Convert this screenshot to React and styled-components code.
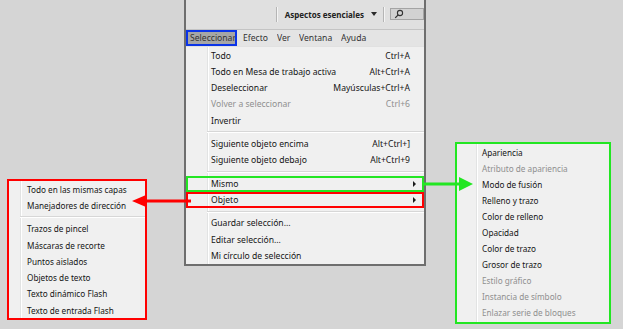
import React from 'react';
import styled, { createGlobalStyle } from 'styled-components';

const GlobalStyle = createGlobalStyle`
  html, body { margin: 0; padding: 0; background: #d5d5d5; }
  body { font-family: "Noto Sans", "Open Sans", sans-serif; }
`;

const MENU = [
  [
    { label: 'Todo', keys: 'Ctrl+A' },
    { label: 'Todo en Mesa de trabajo activa', keys: 'Alt+Ctrl+A' },
    { label: 'Deseleccionar', keys: 'Mayúsculas+Ctrl+A' },
    { label: 'Volver a seleccionar', keys: 'Ctrl+6', disabled: true },
    { label: 'Invertir' },
  ],
  [
    { label: 'Siguiente objeto encima', keys: 'Alt+Ctrl+]' },
    { label: 'Siguiente objeto debajo', keys: 'Alt+Ctrl+9' },
  ],
  [
    { label: 'Mismo', sub: true, mark: '#22e622' },
    { label: 'Objeto', sub: true, mark: '#ff0000' },
  ],
  [
    { label: 'Guardar selección...' },
    { label: 'Editar selección...' },
    { label: 'Mi círculo de selección' },
  ],
];

const OBJETO = [
  [{ label: 'Todo en las mismas capas' }, { label: 'Manejadores de dirección' }],
  [
    { label: 'Trazos de pincel' },
    { label: 'Máscaras de recorte' },
    { label: 'Puntos aislados' },
    { label: 'Objetos de texto' },
    { label: 'Texto dinámico Flash' },
    { label: 'Texto de entrada Flash' },
  ],
];

const MISMO = [
  [
    { label: 'Apariencia' },
    { label: 'Atributo de apariencia', disabled: true },
    { label: 'Modo de fusión' },
    { label: 'Relleno y trazo' },
    { label: 'Color de relleno' },
    { label: 'Opacidad' },
    { label: 'Color de trazo' },
    { label: 'Grosor de trazo' },
    { label: 'Estilo gráfico', disabled: true },
    { label: 'Instancia de símbolo', disabled: true },
    { label: 'Enlazar serie de bloques', disabled: true },
  ],
];

const Stage = styled.div`
  position: relative;
  width: 623px;
  height: 329px;
  overflow: hidden;
  display: flex;
  align-items: flex-start;
  padding-left: 7px;
  box-sizing: border-box;
  background: #d5d5d5;
`;

const Callout = styled.div`
  box-sizing: border-box;
  margin-top: ${(p) => p.$top}px;
  margin-left: ${(p) => p.$left || 0}px;
  width: ${(p) => p.$width}px;
  height: ${(p) => p.$height}px;
  border: 2px solid ${(p) => p.$color};
  background: #f0f0f0;
  flex-shrink: 0;
`;

const Panel = styled.div`
  background: linear-gradient(
    to right,
    #f0f0f0 ${(p) => p.$gutter}px,
    #e2e3e3 ${(p) => p.$gutter}px,
    #e2e3e3 ${(p) => p.$gutter + 1}px,
    #ffffff ${(p) => p.$gutter + 1}px,
    #ffffff ${(p) => p.$gutter + 2}px,
    #f0f0f0 ${(p) => p.$gutter + 2}px
  );
  height: 100%;
`;

const Row = styled.div`
  box-sizing: border-box;
  height: ${(p) => p.$h}px;
  display: flex;
  align-items: center;
  justify-content: space-between;
  padding-left: ${(p) => p.$pad}px;
  padding-right: ${(p) => (p.$sub ? 8 : 14)}px;
  font-size: ${(p) => p.$size}px;
  color: ${(p) => (p.$disabled ? '#8f8f8f' : '#141414')};
  white-space: nowrap;
  outline: ${(p) => (p.$mark ? `2px solid ${p.$mark}` : 'none')};
  outline-offset: -2px;
`;

const Sep = styled.div`
  height: 7px;
  display: flex;
  align-items: center;
  padding-left: ${(p) => p.$gutter}px;
  &::after {
    content: '';
    flex: 1;
    border-top: 1px solid #d7d7d7;
    border-bottom: 1px solid #ffffff;
    box-sizing: border-box;
    height: 2px;
  }
`;

const SubArrow = styled.span`
  width: 0;
  height: 0;
  border-top: 3px solid transparent;
  border-bottom: 3px solid transparent;
  border-left: 3px solid #1b1b1b;
`;

const Window = styled.div`
  box-sizing: border-box;
  margin-left: ${(p) => p.$left}px;
  width: 242px;
  height: 266px;
  border: 2px solid #6e6e6e;
  border-top: none;
  background: #e1e1e1;
  display: flex;
  flex-direction: column;
  flex-shrink: 0;
`;

const Toolbar = styled.div`
  height: 29px;
  border-bottom: 1px solid #c4c4c4;
  display: flex;
  align-items: center;
  justify-content: flex-end;
  background: #e0e0e0;
`;

const ToolSep = styled.div`
  width: 1px;
  height: 15px;
  background: #b5b5b5;
  box-shadow: 1px 0 0 #f4f4f4;
  margin-right: ${(p) => p.$right}px;
`;

const Workspace = styled.div`
  display: flex;
  align-items: center;
  gap: 7px;
  font-size: 8px;
  font-weight: 700;
  color: #222;
  margin-right: 6px;
  white-space: nowrap;
`;

const Caret = styled.span`
  width: 0;
  height: 0;
  border-left: 3px solid transparent;
  border-right: 3px solid transparent;
  border-top: 4px solid #2a2a2a;
`;

const Search = styled.div`
  width: 34px;
  height: 12px;
  border: 1px solid #a4a4a4;
  background: #d2d2d2;
  display: flex;
  align-items: center;
  padding-left: 3px;
  box-sizing: border-box;
  margin-bottom: 1px;
`;

const MenuBar = styled.div`
  height: 17px;
  display: flex;
  align-items: center;
  background: #e4e4e4;
  font-size: 8.6px;
  color: #333;
`;

const MenuTitle = styled.div`
  box-sizing: border-box;
  height: 16px;
  display: flex;
  align-items: center;
  padding-left: ${(p) => (p.$active ? 2 : 0)}px;
  width: ${(p) => p.$w}px;
  background: ${(p) => (p.$active ? '#a6a6a6' : 'transparent')};
  border: ${(p) => (p.$active ? '2px solid #0b34e8' : 'none')};
  margin-right: ${(p) => (p.$active ? 6 : 0)}px;
  white-space: nowrap;
  overflow: hidden;
`;

const Dropdown = styled.div`
  flex: 1;
  padding-top: 1px;
`;

const Arrows = styled.svg`
  position: absolute;
  left: 0;
  top: 0;
  pointer-events: none;
`;

const MenuList = ({ groups, gutter, pad, rowH, size }) => (
  <Panel $gutter={gutter}>
    {groups.map((group, gi) => (
      <React.Fragment key={gi}>
        {gi > 0 && <Sep $gutter={gutter} />}
        {group.map((item) => (
          <Row
            key={item.label}
            $h={rowH}
            $pad={pad}
            $size={size}
            $disabled={item.disabled}
            $sub={item.sub}
            $mark={item.mark}
          >
            <span>{item.label}</span>
            {item.keys && <span>{item.keys}</span>}
            {item.sub && <SubArrow />}
          </Row>
        ))}
      </React.Fragment>
    ))}
  </Panel>
);

const App = () => {
  return (
    <>
      <GlobalStyle />
      <Stage>
        <Callout $top={179} $width={140} $height={141} $color="#ff0000">
          <MenuList groups={OBJETO} gutter={11} pad={18} rowH={16.3} size={8.2} />
        </Callout>

        <Window $left={37}>
          <Toolbar>
            <ToolSep $right={8} />
            <Workspace>
              Aspectos esenciales <Caret />
            </Workspace>
            <ToolSep $right={6} />
            <Search>
              <svg width="10" height="10" viewBox="0 0 10 10">
                <circle cx="6" cy="4" r="2.6" fill="none" stroke="#333" strokeWidth="1.1" />
                <line x1="4.2" y1="5.9" x2="1.2" y2="8.9" stroke="#333" strokeWidth="1.3" />
              </svg>
            </Search>
          </Toolbar>
          <MenuBar>
            <MenuTitle $active $w={51}>Seleccionar</MenuTitle>
            <MenuTitle $w={34}>Efecto</MenuTitle>
            <MenuTitle $w={22}>Ver</MenuTitle>
            <MenuTitle $w={42}>Ventana</MenuTitle>
            <MenuTitle $w={30}>Ayuda</MenuTitle>
          </MenuBar>
          <Dropdown>
            <MenuList groups={MENU} gutter={21} pad={25} rowH={16.3} size={8.6} />
          </Dropdown>
        </Window>

        <Callout $top={142} $left={29} $width={156} $height={182} $color="#22e622">
          <MenuList groups={MISMO} gutter={19} pad={25} rowH={16} size={8.2} />
        </Callout>

        <Arrows width="623" height="329">
          <line x1="424" y1="184" x2="462" y2="184" stroke="#22e622" strokeWidth="3" />
          <polygon points="459,177 473,184 459,191" fill="#22e622" />
          <line x1="191" y1="201" x2="143" y2="201" stroke="#ff0000" strokeWidth="3" />
          <polygon points="146,195 132,201 146,207" fill="#ff0000" />
        </Arrows>
      </Stage>
    </>
  );
};

export default App;
